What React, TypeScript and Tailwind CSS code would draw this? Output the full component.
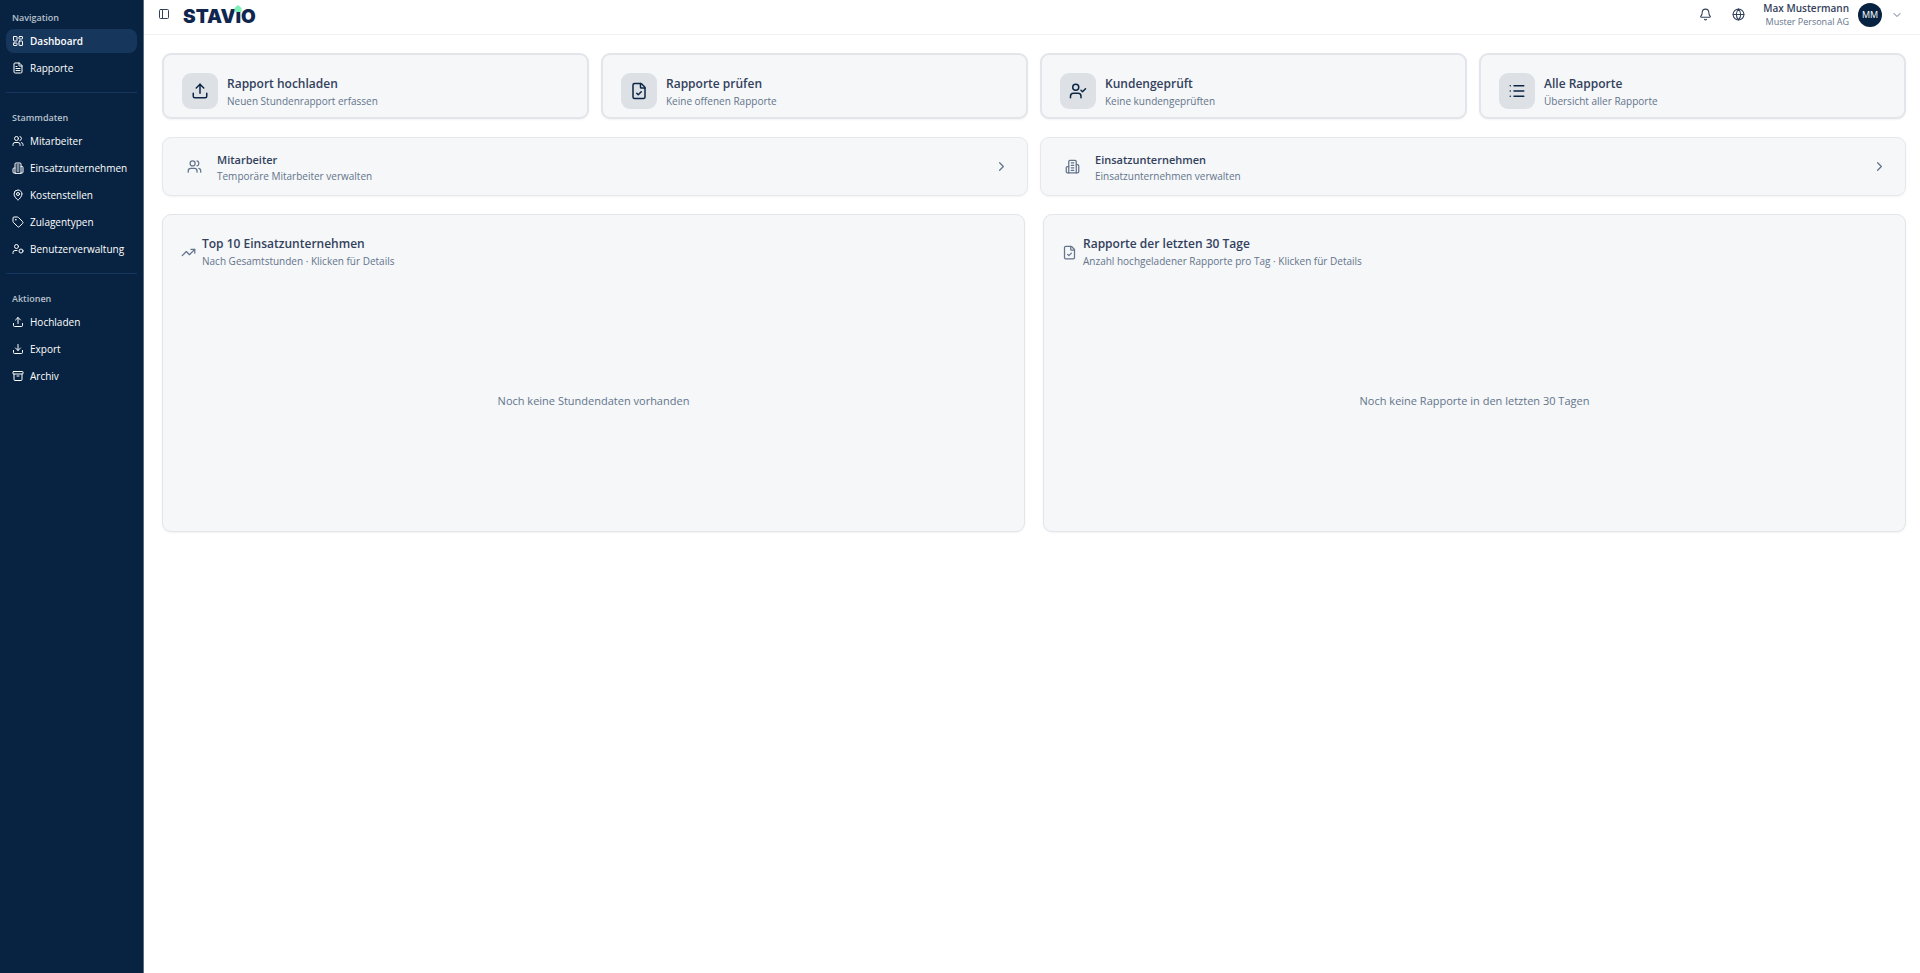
import React from "react";
import {
  Archive,
  Bell,
  ChevronDown,
  ChevronRight,
  Download,
  FileCheck,
  FileText,
  Globe,
  LayoutDashboard,
  List,
  MapPin,
  PanelLeft,
  Tag,
  TrendingUp,
  Upload,
  UserCheck,
  Users,
} from "lucide-react";

type IconType = React.ComponentType<{ className?: string }>;
type Item = { label: string; icon: IconType; active?: boolean };

function Company({ className }: { className?: string }) {
  return (
    <svg
      viewBox="0 0 24 24"
      fill="none"
      stroke="currentColor"
      strokeWidth="2"
      strokeLinecap="round"
      strokeLinejoin="round"
      className={className}
      aria-hidden="true"
    >
      <path d="M6 22V4a2 2 0 0 1 2-2h8a2 2 0 0 1 2 2v18Z" />
      <path d="M6 12H4a2 2 0 0 0-2 2v6a2 2 0 0 0 2 2h2" />
      <path d="M18 9h2a2 2 0 0 1 2 2v9a2 2 0 0 1-2 2h-2" />
      <path d="M10 6h4M10 10h4M10 14h4M10 18h4" />
    </svg>
  );
}

function UserSettings({ className }: { className?: string }) {
  return (
    <svg
      viewBox="0 0 24 24"
      fill="none"
      stroke="currentColor"
      strokeWidth="2"
      strokeLinecap="round"
      strokeLinejoin="round"
      className={className}
      aria-hidden="true"
    >
      <circle cx="9" cy="7" r="4" />
      <path d="M10 15H6a4 4 0 0 0-4 4v2" />
      <circle cx="18" cy="16" r="4" />
    </svg>
  );
}

const groups: { title: string; items: Item[] }[] = [
  {
    title: "Navigation",
    items: [
      { label: "Dashboard", icon: LayoutDashboard, active: true },
      { label: "Rapporte", icon: FileText },
    ],
  },
  {
    title: "Stammdaten",
    items: [
      { label: "Mitarbeiter", icon: Users },
      { label: "Einsatzunternehmen", icon: Company },
      { label: "Kostenstellen", icon: MapPin },
      { label: "Zulagentypen", icon: Tag },
      { label: "Benutzerverwaltung", icon: UserSettings },
    ],
  },
  {
    title: "Aktionen",
    items: [
      { label: "Hochladen", icon: Upload },
      { label: "Export", icon: Download },
      { label: "Archiv", icon: Archive },
    ],
  },
];

const actions = [
  { title: "Rapport hochladen", text: "Neuen Stundenrapport erfassen", icon: Upload },
  { title: "Rapporte prüfen", text: "Keine offenen Rapporte", icon: FileCheck },
  { title: "Kundengeprüft", text: "Keine kundengeprüften", icon: UserCheck },
  { title: "Alle Rapporte", text: "Übersicht aller Rapporte", icon: List },
];

const links = [
  { title: "Mitarbeiter", text: "Temporäre Mitarbeiter verwalten", icon: Users },
  { title: "Einsatzunternehmen", text: "Einsatzunternehmen verwalten", icon: Company },
];

const charts = [
  {
    title: "Top 10 Einsatzunternehmen",
    text: "Nach Gesamtstunden · Klicken für Details",
    empty: "Noch keine Stundendaten vorhanden",
    icon: TrendingUp,
  },
  {
    title: "Rapporte der letzten 30 Tage",
    text: "Anzahl hochgeladener Rapporte pro Tag · Klicken für Details",
    empty: "Noch keine Rapporte in den letzten 30 Tagen",
    icon: FileCheck,
  },
];

function Sidebar() {
  return (
    <aside className="w-36 shrink-0 border-r border-[#5b6b82] bg-[#082341] px-1.5 pt-1.5 text-white">
      <nav>
        {groups.map((group, index) => (
          <section key={group.title} className={index > 0 ? "mt-3 border-t border-[#14365f] pt-[13px]" : ""}>
            <h2 className="flex h-[23px] items-center px-1.5 text-[9px] font-semibold text-[#b8c1cd]">{group.title}</h2>
            <ul className="flex flex-col gap-[3px]">
              {group.items.map(({ label, icon: Icon, active }) => (
                <li key={label}>
                  <a
                    href="#"
                    className={
                      active
                        ? "flex h-6 items-center gap-1.5 rounded-lg bg-[#17365c] px-1.5 text-[10px] font-semibold"
                        : "flex h-6 items-center gap-1.5 rounded-lg px-1.5 text-[10px] font-medium"
                    }
                  >
                    <Icon className="size-3 shrink-0" />
                    <span className="whitespace-nowrap">{label}</span>
                  </a>
                </li>
              ))}
            </ul>
          </section>
        ))}
      </nav>
    </aside>
  );
}

function Logo() {
  return (
    <a href="#" className="flex pt-1.5 font-['Inter',sans-serif] text-[19px] leading-6 font-black text-[#10264f]">
      STAV
      <span className="relative">
        i
        <svg viewBox="0 0 8 7" className="absolute top-0 -left-px h-[7px] w-2" aria-hidden="true">
          <path d="M4 0 7.500 3v4H.5V3Z" fill="#7df0b6" />
        </svg>
      </span>
      O
    </a>
  );
}

function Header() {
  return (
    <header className="flex h-[35px] items-start justify-between border-b border-[#f0f2f4] pr-[17px] pl-3.5">
      <div className="flex h-7 items-center gap-[13px]">
        <button type="button" aria-label="Seitenleiste umschalten" className="text-[#33415c]">
          <PanelLeft className="size-3" />
        </button>
        <Logo />
      </div>
      <div className="flex h-[29px] items-center text-[#33415c]">
        <button type="button" aria-label="Benachrichtigungen" className="mr-5">
          <Bell className="size-[13px]" />
        </button>
        <button type="button" aria-label="Sprache" className="mr-[18px]">
          <Globe className="size-[13px]" />
        </button>
        <button type="button" className="flex items-center gap-[9px]">
          <span className="flex flex-col items-end">
            <span className="text-[10px] leading-[13px] font-semibold">Max Mustermann</span>
            <span className="text-[9px] leading-[13px] text-[#64748b]">Muster Personal AG</span>
          </span>
          <span className="flex size-6 items-center justify-center rounded-full bg-[#082341] text-[9px] font-medium text-white">
            MM
          </span>
          <ChevronDown className="size-3 text-[#64748b]" />
        </button>
      </div>
    </header>
  );
}

export default function App() {
  return (
    <div className="flex min-h-screen bg-white font-['Open_Sans',sans-serif] text-[#33415c]">
      <Sidebar />
      <div className="min-w-0 flex-1">
        <Header />
        <main className="flex flex-col gap-[18px] pt-[18px] pr-3.5 pb-[18px] pl-[18px]">
          <div className="grid grid-cols-4 gap-3">
            {actions.map(({ title, text, icon: Icon }) => (
              <a
                key={title}
                href="#"
                className="flex h-[66px] items-start gap-[9px] rounded-[9px] border-2 border-[#e2e6ea] bg-[#f5f7f9] px-[18px] pt-[18px] shadow-xs"
              >
                <span className="flex size-9 shrink-0 items-center justify-center rounded-[9px] bg-[#dde1e6] text-[#0b2545]">
                  <Icon className="size-[18px]" />
                </span>
                <span className="flex flex-col pt-0.5">
                  <span className="text-[12px] leading-[18px] font-semibold">{title}</span>
                  <span className="text-[10px] leading-4 text-[#64748b]">{text}</span>
                </span>
              </a>
            ))}
          </div>
          <div className="grid grid-cols-2 gap-3">
            {links.map(({ title, text, icon: Icon }) => (
              <a
                key={title}
                href="#"
                className="flex h-[59px] items-center rounded-[9px] border border-[#e5e9ed] bg-[#f5f7f9] pr-[18px] pl-6 shadow-xs"
              >
                <Icon className="size-[15px] shrink-0 text-[#64748b]" />
                <span className="ml-[15px] flex flex-1 flex-col pt-0.5">
                  <span className="text-[11px] leading-4 font-semibold">{title}</span>
                  <span className="text-[10px] leading-4 text-[#64748b]">{text}</span>
                </span>
                <ChevronRight className="size-[15px] text-[#64748b]" />
              </a>
            ))}
          </div>
          <div className="grid grid-cols-2 gap-[18px]">
            {charts.map(({ title, text, empty, icon: Icon }) => (
              <section
                key={title}
                className="flex flex-col rounded-[9px] border border-[#e2e6ea] bg-[#f5f7f9] px-[18px] pt-5 pb-3.5 shadow-xs"
              >
                <div className="flex items-center gap-1.5">
                  <Icon className="size-[15px] shrink-0 text-[#64748b]" />
                  <div>
                    <h2 className="text-[12px] leading-[18px] font-semibold">{title}</h2>
                    <p className="text-[10px] leading-4 text-[#64748b]">{text}</p>
                  </div>
                </div>
                <p className="mt-4 flex h-[232px] items-center justify-center text-[11px] text-[#64748b]">{empty}</p>
              </section>
            ))}
          </div>
        </main>
      </div>
    </div>
  );
}
